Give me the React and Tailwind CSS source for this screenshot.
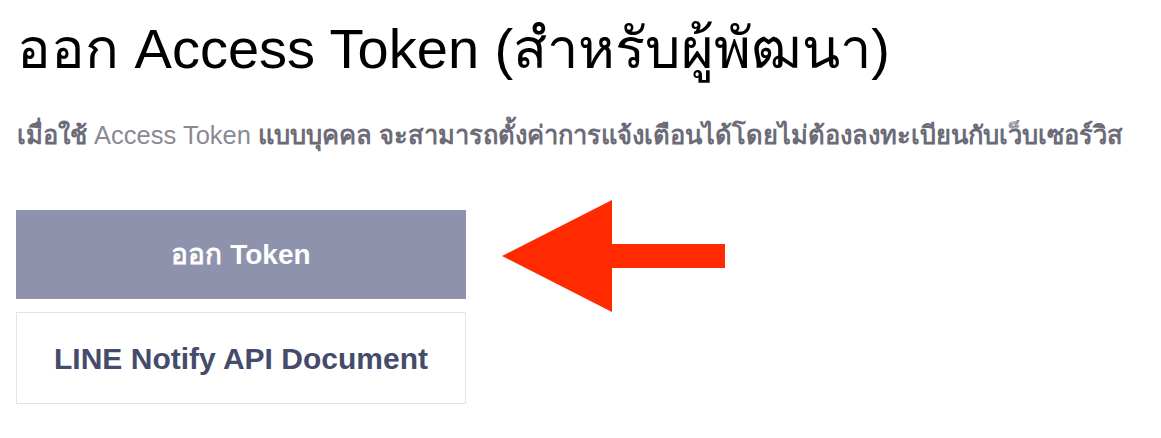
export default function App() {
  return (
    <div className="w-[1161px] h-[438px] bg-white overflow-hidden" style={{ fontFamily: '"Liberation Sans", Arial, sans-serif' }}>
      <div className="pl-[17px] pt-[21px]">
        <h1 className="h-[56px] text-[56px] leading-[56px] text-black font-normal whitespace-nowrap">
          ออก Access Token (สำหรับผู้พัฒนา)
        </h1>
        <p className="mt-[46px] h-[24px] text-[25.5px] leading-[24px] whitespace-nowrap text-[#6b6c78] font-bold">
          เมื่อใช้ <span className="font-normal text-[#8a8a92]">Access Token</span> แบบบุคคล จะสามารถตั้งค่าการแจ้งเตือนได้โดยไม่ต้องลงทะเบียนกับเว็บเซอร์วิส
        </p>
      </div>
      <div className="pl-[16px] mt-[63px] flex flex-col gap-[13px]">
        <div className="flex items-start gap-[36px]">
          <button className="w-[450px] h-[89px] bg-[#8e92ac] text-white text-[28px] font-bold flex items-center justify-center">
            ออก Token
          </button>
          <svg width="224" height="113" viewBox="0 0 224 113" className="-mt-[10px] -mb-[14px]">
            <polygon points="0,56 110,0 110,44 223,44 223,68 110,68 110,112" fill="#ff2a00" />
          </svg>
        </div>
        <button className="w-[450px] h-[92px] bg-white border border-[#e4e4e8] text-[#454b6b] text-[30px] font-bold flex items-center justify-center">
          LINE Notify API Document
        </button>
      </div>
    </div>
  );
}
